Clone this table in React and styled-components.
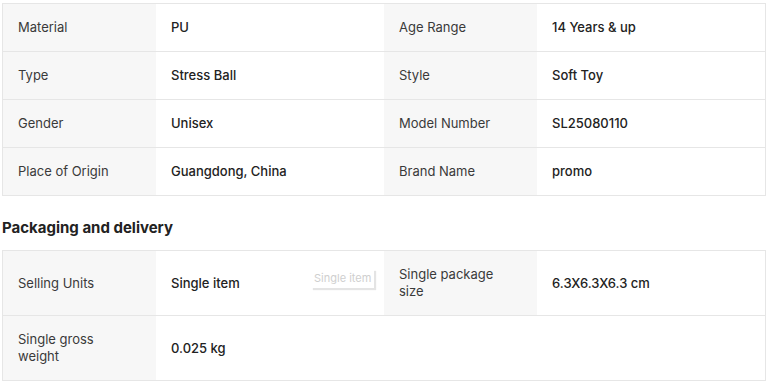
import React from 'react';
import styled, { createGlobalStyle } from 'styled-components';

const GlobalStyle = createGlobalStyle`
    body {
        margin: 0;
        background: #fff;
        font-family: Inter, "Noto Sans", "Liberation Sans", sans-serif;
        color: #222;
    }
`;

const Page = styled.div`
    padding: 3px 2px 0 2px;
    width: 764px;
`;

const Table = styled.div`
    display: grid;
    grid-template-columns: 153px 228px 153px 1fr;
    border: 1px solid #e6e6e6;
    border-bottom: none;
`;

const Cell = styled.div`
    position: relative;
    display: flex;
    align-items: center;
    box-sizing: border-box;
    height: ${p => p.$h}px;
    padding: 0 ${p => (p.$label ? 26 : 16)}px 0 15px;
    border-bottom: 1px solid #e6e6e6;
    background: ${p => (p.$label ? '#f7f7f7' : '#fff')};
    font-size: 13px;
    line-height: 17px;
    font-weight: ${p => (p.$label ? 400 : 500)};
    color: ${p => (p.$label ? '#3a3a3a' : '#222')};
`;

const Heading = styled.h3`
    margin: 0;
    height: 54px;
    display: flex;
    align-items: center;
    padding-top: 8px;
    box-sizing: border-box;
    font-size: 15px;
    font-weight: 700;
    color: #222;
`;

const Ghost = styled.span`
    position: absolute;
    left: 155px;
    top: 18px;
    padding: 1px 3px;
    font-size: 11px;
    font-weight: 400;
    color: #cfcfcf;
    background: #fff;
    box-shadow: 2px 2px 1px #e4e4e4;
`;

const specs = [
    ['Material', 'PU', 'Age Range', '14 Years & up'],
    ['Type', 'Stress Ball', 'Style', 'Soft Toy'],
    ['Gender', 'Unisex', 'Model Number', 'SL25080110'],
    ['Place of Origin', 'Guangdong, China', 'Brand Name', 'promo'],
];

const App = () => {
    return (
        <Page>
            <GlobalStyle />
            <Table>
                {specs.map(row => (
                    <React.Fragment key={row[0]}>
                        <Cell $label $h={48}>{row[0]}</Cell>
                        <Cell $h={48}>{row[1]}</Cell>
                        <Cell $label $h={48}>{row[2]}</Cell>
                        <Cell $h={48}>{row[3]}</Cell>
                    </React.Fragment>
                ))}
            </Table>
            <Heading>Packaging and delivery</Heading>
            <Table>
                <Cell $label $h={65}>Selling Units</Cell>
                <Cell $h={65}>
                    Single item
                    <Ghost>Single item</Ghost>
                </Cell>
                <Cell $label $h={65}>Single package size</Cell>
                <Cell $h={65}>6.3X6.3X6.3 cm</Cell>
                <Cell $label $h={65}>Single gross weight</Cell>
                <Cell $h={65}>0.025 kg</Cell>
                <Cell $h={65} />
                <Cell $h={65} />
            </Table>
        </Page>
    );
};

export default App;
